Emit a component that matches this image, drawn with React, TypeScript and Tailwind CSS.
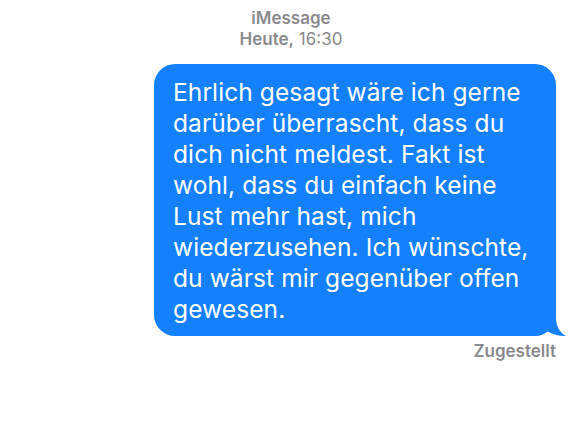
const lines = [
  'Ehrlich gesagt wäre ich gerne',
  'darüber überrascht, dass du',
  'dich nicht meldest. Fakt ist',
  'wohl, dass du einfach keine',
  'Lust mehr hast, mich',
  'wiederzusehen. Ich wünschte,',
  'du wärst mir gegenüber offen',
  'gewesen.',
];

export default function App() {
  return (
    <div className="w-[582px] h-[426px] bg-white flex flex-col font-['Inter','Liberation_Sans',sans-serif]">
      <div className="pt-[8px] flex flex-col items-center text-[17px] leading-[21px] text-[#8a8a8e]">
        <span className="font-semibold">iMessage</span>
        <span>
          <span className="font-semibold">Heute,</span> 16:30
        </span>
      </div>
      <div className="mt-[14px] self-end mr-[26px] relative">
        <div className="w-[402px] bg-[#1580fb] rounded-[21px] pl-[19px] pr-[10px] pt-[13px] pb-[11px] text-white text-[24.5px] leading-[31px] tracking-[0.1px] whitespace-nowrap">
          {lines.map((l) => (
            <div key={l}>{l}</div>
          ))}
        </div>
        <svg className="absolute right-[-10px] bottom-0" width="30" height="28" viewBox="0 0 30 28">
          <path d="M8 0 H20 V10 C20 18 24 25 30 28 C22 28 15 26 10 22 C6 25 2 27 -4 28 H0 Z" fill="#1580fb" />
        </svg>
      </div>
      <div className="self-end mr-[26px] mt-[4px] text-[17px] leading-[22px] font-semibold text-[#8a8a8e]">Zugestellt</div>
    </div>
  );
}
